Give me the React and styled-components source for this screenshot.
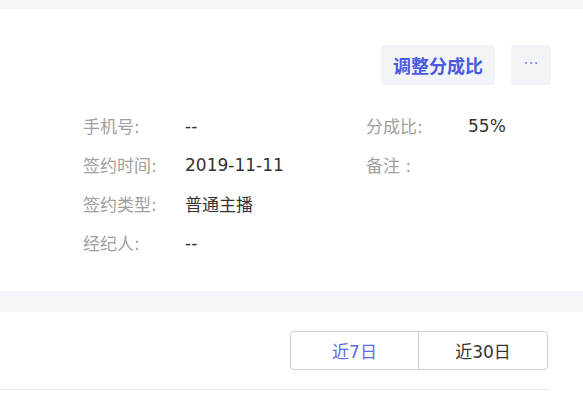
import styled, { createGlobalStyle } from "styled-components";

const GlobalStyle = createGlobalStyle`
  body {
    margin: 0;
    background: #f4f6f9;
    font-family: "DejaVu Sans", "Noto Sans CJK SC", sans-serif;
    overflow: hidden;
  }
`;

const Page = styled.div`
  padding-top: 9px;
  display: flex;
  flex-direction: column;
  gap: 21px;
`;

const Card = styled.div`
  background: #fff;
  height: 282px;
  box-sizing: border-box;
  padding: 36px 32px 0 83px;
`;

const Actions = styled.div`
  display: flex;
  justify-content: flex-end;
  gap: 16px;
`;

const ActionBtn = styled.button`
  height: 40px;
  padding: 0 12px;
  border: none;
  border-radius: 3px;
  background: #f3f4f7;
  color: #4a5be0;
  font-family: "Noto Sans CJK SC", sans-serif;
  font-size: 18px;
  font-weight: 700;
  display: flex;
  align-items: center;
  justify-content: center;
`;

const MoreBtn = styled.button`
  width: 40px;
  height: 40px;
  padding: 0 0 4px;
  border: none;
  border-radius: 3px;
  background: #f3f4f7;
  color: #7f8be0;
  font-family: "DejaVu Sans", sans-serif;
  font-size: 16px;
  display: flex;
  align-items: center;
  justify-content: center;
`;

const InfoGrid = styled.div`
  margin-top: 21px;
  display: grid;
  grid-template-columns: 283px 1fr;
`;

const Column = styled.div`
  display: flex;
  flex-direction: column;
`;

const Row = styled.div`
  display: flex;
  height: 39px;
  align-items: center;
  font-size: 17px;
`;

const Label = styled.span`
  width: 102px;
  color: #a0a0a0;
`;

const Value = styled.span`
  color: #333;
`;

const Section = styled.div`
  background: #fff;
  height: 81px;
  padding: 19px 0 0 0;
`;

const ToolRow = styled.div`
  display: flex;
  justify-content: flex-end;
  padding-right: 35px;
  width: 583px;
  box-sizing: border-box;
`;

const Segment = styled.div`
  display: flex;
  border: 1px solid #cfcfcf;
  border-radius: 4px;
  height: 39px;
  box-sizing: border-box;
  overflow: hidden;
`;

const SegItem = styled.div`
  width: ${({ $w }) => $w}px;
  display: flex;
  align-items: center;
  justify-content: center;
  font-size: 17px;
  color: ${({ $active }) => ($active ? "#5b6be0" : "#333")};
  & + & {
    border-left: 1px solid #cfcfcf;
  }
`;

const Divider = styled.div`
  margin-top: 19px;
  width: 550px;
  height: 1px;
  background: #e8e8e8;
`;

const left = [
  ["手机号:", "--"],
  ["签约时间:", "2019-11-11"],
  ["签约类型:", "普通主播"],
  ["经纪人:", "--"],
];

const right = [
  ["分成比:", "55%"],
  ["备注 :", ""],
];

export default function App() {
  return (
    <>
      <GlobalStyle />
      <Page>
        <Card>
          <Actions>
            <ActionBtn>调整分成比</ActionBtn>
            <MoreBtn>···</MoreBtn>
          </Actions>
          <InfoGrid>
            <Column>
              {left.map(([l, v]) => (
                <Row key={l}>
                  <Label>{l}</Label>
                  <Value>{v}</Value>
                </Row>
              ))}
            </Column>
            <Column>
              {right.map(([l, v]) => (
                <Row key={l}>
                  <Label>{l}</Label>
                  <Value>{v}</Value>
                </Row>
              ))}
            </Column>
          </InfoGrid>
        </Card>
        <Section>
          <ToolRow>
            <Segment>
              <SegItem $w={127} $active>近7日</SegItem>
              <SegItem $w={128}>近30日</SegItem>
            </Segment>
          </ToolRow>
          <Divider />
        </Section>
      </Page>
    </>
  );
}
